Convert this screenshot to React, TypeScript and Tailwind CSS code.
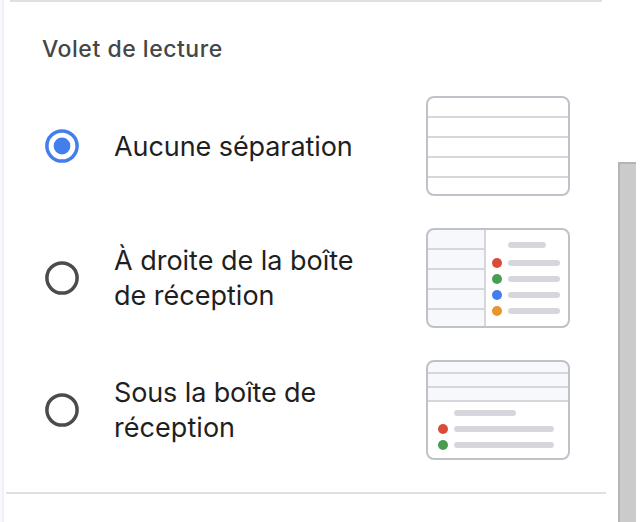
import { useState } from "react";
import type { ReactNode } from "react";

type Line = { text: string; spacing: string };

type PaneOption = {
  id: string;
  lines: Line[];
  preview: ReactNode;
};

function NoSplitPreview() {
  return (
    <g fill="#d6d7dc">
      <rect x="2" y="20" width="140" height="2" />
      <rect x="2" y="40" width="140" height="2" />
      <rect x="2" y="60" width="140" height="2" />
      <rect x="2" y="80" width="140" height="2" />
    </g>
  );
}

function RightPreview() {
  return (
    <>
      <path d="M8 1h51v98H8a7 7 0 0 1-7-7V8a7 7 0 0 1 7-7Z" fill="#f6f8fb" />
      <g fill="#d6d7dc">
        <rect x="2" y="20" width="56" height="2" />
        <rect x="2" y="40" width="56" height="2" />
        <rect x="2" y="60" width="56" height="2" />
        <rect x="2" y="80" width="56" height="2" />
        <rect x="58" y="2" width="2" height="96" />
        <rect x="82" y="14" width="38" height="6" rx="3" />
        <rect x="82" y="32" width="52" height="6" rx="3" />
        <rect x="82" y="48" width="52" height="6" rx="3" />
        <rect x="82" y="64" width="52" height="6" rx="3" />
        <rect x="82" y="80" width="52" height="6" rx="3" />
      </g>
      <circle cx="71" cy="35" r="5" fill="#db4b3a" />
      <circle cx="71" cy="51" r="5" fill="#489d53" />
      <circle cx="71" cy="67" r="5" fill="#427fed" />
      <circle cx="71" cy="83" r="5" fill="#ea942f" />
    </>
  );
}

function BelowPreview() {
  return (
    <>
      <path d="M8 1h128a7 7 0 0 1 7 7v33H1V8a7 7 0 0 1 7-7Z" fill="#f6f8fb" />
      <g fill="#d6d7dc">
        <rect x="2" y="12" width="140" height="2" />
        <rect x="2" y="26" width="140" height="2" />
        <rect x="2" y="40" width="140" height="2" />
        <rect x="28" y="50" width="62" height="6" rx="3" />
        <rect x="28" y="66" width="100" height="6" rx="3" />
        <rect x="28" y="82" width="100" height="6" rx="3" />
      </g>
      <circle cx="17" cy="69" r="5" fill="#db4b3a" />
      <circle cx="17" cy="85" r="5" fill="#489d53" />
    </>
  );
}

const options: PaneOption[] = [
  {
    id: "none",
    lines: [{ text: "Aucune séparation", spacing: "tracking-[-0.08px]" }],
    preview: <NoSplitPreview />,
  },
  {
    id: "right",
    lines: [
      { text: "À droite de la boîte", spacing: "tracking-[-0.02px]" },
      { text: "de réception", spacing: "tracking-[0px]" },
    ],
    preview: <RightPreview />,
  },
  {
    id: "below",
    lines: [
      { text: "Sous la boîte de", spacing: "tracking-[-0.12px]" },
      { text: "réception", spacing: "tracking-[0.05px]" },
    ],
    preview: <BelowPreview />,
  },
];

function Radio({ checked }: { checked: boolean }) {
  return (
    <svg viewBox="0 0 34 34" className="size-[34px] shrink-0" fill="none">
      <circle
        cx="17"
        cy="17"
        r="15.1"
        stroke={checked ? "#427fed" : "#4b4b4b"}
        strokeWidth="3.5"
      />
      {checked && <circle cx="17" cy="17" r="8.4" fill="#427fed" />}
    </svg>
  );
}

function OptionRow({
  option,
  checked,
  onSelect,
}: {
  option: PaneOption;
  checked: boolean;
  onSelect: () => void;
}) {
  return (
    <button
      type="button"
      role="radio"
      aria-checked={checked}
      onClick={onSelect}
      className="flex h-[100px] w-[525px] items-center text-left"
    >
      <Radio checked={checked} />
      <span className="ml-[35px] w-[312px] text-[27px] leading-[35px] text-[#1f1f1f]">
        {option.lines.map((line) => (
          <span
            key={line.text}
            className={`block whitespace-nowrap ${line.spacing}`}
          >
            {line.text}
          </span>
        ))}
      </span>
      <svg
        viewBox="0 0 144 100"
        className="h-[100px] w-[144px] shrink-0"
        fill="none"
      >
        {option.preview}
        <rect
          x="1"
          y="1"
          width="142"
          height="98"
          rx="7"
          stroke="#bfc2c9"
          strokeWidth="2"
        />
      </svg>
    </button>
  );
}

export default function App() {
  const [selected, setSelected] = useState("none");

  return (
    <div className="flex h-[522px] w-[640px] overflow-hidden bg-white font-['Inter',sans-serif]">
      <div className="w-1 shrink-0 border-r-2 border-[#eef1f5] bg-[#f6f8fc]" />
      <section className="flex w-[614px] flex-col">
        <div className="ml-1.5 h-0.5 w-[592px] bg-[#e0e0e0]" />
        <h2 className="mt-8 ml-[38px] text-[23px] leading-[30px] font-medium tracking-[0.53px] text-[#444746]">
          Volet de lecture
        </h2>
        <div role="radiogroup" className="mt-8 ml-[41px] flex flex-col gap-8">
          {options.map((option) => (
            <OptionRow
              key={option.id}
              option={option}
              checked={option.id === selected}
              onSelect={() => setSelected(option.id)}
            />
          ))}
        </div>
        <div className="mt-8 ml-0.5 h-0.5 w-[600px] shrink-0 bg-[#e0e0e0]" />
      </section>
      <div className="mt-[162px] w-[18px] shrink-0 border-t-2 border-l-2 border-[#b5b5b5] bg-[#cbcbcb]" />
    </div>
  );
}
